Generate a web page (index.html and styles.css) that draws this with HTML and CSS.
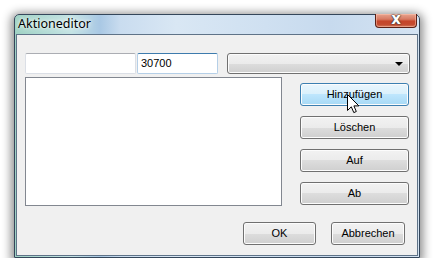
FILE: index.html
```html
<!DOCTYPE html>
<html>
<head>
<meta charset="utf-8">
<link rel="stylesheet" href="styles.css">
</head>
<body>
<div class="window">
  <div class="titlebar">
    <span class="title">Aktioneditor</span>
    <div class="close"><span class="x">x</span></div>
  </div>
  <div class="client">
    <div class="row1">
      <div class="edit e1"></div>
      <div class="edit e2 focus">30700</div>
      <div class="combo"><span class="arrow"></span></div>
    </div>
    <div class="row2">
      <div class="listbox"></div>
      <div class="btncol">
        <div class="btn hover">Hinzufügen</div>
        <div class="btn">Löschen</div>
        <div class="btn">Auf</div>
        <div class="btn">Ab</div>
      </div>
    </div>
    <div class="row3">
      <div class="btn ok">OK</div>
      <div class="btn cancel">Abbrechen</div>
    </div>
  </div>
  <svg class="cursor" width="13" height="20" viewBox="0 0 13 20">
    <path d="M0.5,0.5 L0.5,16.5 L4.3,12.8 L6.8,18.6 L9.3,17.5 L6.9,11.9 L11.9,11.9 Z" fill="#fff" stroke="#000" stroke-width="1" stroke-linejoin="miter"/>
  </svg>
</div>
</body>
</html>
```

FILE: styles.css
```css
* { box-sizing: border-box; }
html, body { margin: 0; padding: 0; background: #fff; }
body {
  padding: 14px 0 0 14px;
  font-family: "Liberation Sans", Arial, sans-serif;
  font-size: 11px;
  color: #000;
}
.window {
  position: relative;
  width: 406px;
  height: 244px;
  border: 1px solid #34465a;
  border-radius: 5px 5px 0 0;
  padding: 0 1px 1px 1px;
  background: linear-gradient(90deg, #9fd2c4 0%, #c4e3e4 14%, #a9c8e4 21%, #c9dcef 26%, #d9e7f4 40%, #cfe0f1 62%, #c7daee 78%, #d4e3f2 100%);
  box-shadow: 0 2px 10px 3px rgba(0,0,0,0.45);
  display: flex;
  flex-direction: column;
}
.titlebar {
  height: 19px;
  position: relative;
  flex: none;
}
.title {
  position: absolute;
  left: 2px;
  top: 0px;
  font-family: "Noto Sans", "Open Sans", sans-serif;
  font-size: 12.5px;
  line-height: 17px;
  color: #000;
  text-shadow: 0 0 6px #fff, 0 0 3px #fff;
}
.close {
  position: absolute;
  right: 1px;
  top: -1px;
  width: 42px;
  height: 14px;
  border: 1px solid #5b2016;
  border-top: none;
  border-radius: 0 0 4px 4px;
  background: linear-gradient(180deg, #e8a48f 0%, #d77a62 40%, #c5452a 55%, #c34a2f 80%, #d27a5c 100%);
  box-shadow: inset 0 0 0 1px rgba(255,200,180,0.5);
  text-align: center;
}
.x {
  display: block;
  font-family: "DejaVu Sans", sans-serif;
  font-weight: bold;
  font-size: 15px;
  line-height: 10px;
  color: #fff;
  text-shadow: 0 0 1px #333, 0 0 1px #333, 0 0 2px #444;
}
.client {
  flex: 1;
  background: #f0f0f0;
  border: 1px solid #5f7388;
  padding: 18px 0 0 8px;
  display: flex;
  flex-direction: column;
}
.row1 {
  display: flex;
  height: 21px;
}
.edit {
  height: 21px;
  background: #fff;
  border: 1px solid #dbdfe6;
  border-top-color: #abadb3;
  border-radius: 2px;
  padding: 3px 3px;
  line-height: 13px;
}
.e1 { width: 111px; }
.e2 { width: 81px; margin-left: 1px; }
.focus {
  border-color: #b5cfe7;
  border-top-color: #3d7bad;
}
.combo {
  position: relative;
  width: 183px;
  margin-left: 9px;
  height: 21px;
  border: 1px solid #707070;
  border-radius: 3px;
  background: linear-gradient(180deg, #f2f2f2 0%, #ebebeb 50%, #dddddd 50%, #cfcfcf 100%);
  box-shadow: inset 0 0 0 1px #fcfcfc;
}
.arrow {
  position: absolute;
  right: 6px;
  top: 8px;
  width: 0;
  height: 0;
  border-left: 4px solid transparent;
  border-right: 4px solid transparent;
  border-top: 4px solid #000;
}
.row2 {
  display: flex;
  margin-top: 3px;
}
.listbox {
  width: 257px;
  height: 129px;
  background: #fff;
  border: 1px solid #828790;
}
.btncol {
  margin-left: 18px;
  margin-top: 6px;
  display: flex;
  flex-direction: column;
  gap: 10px;
}
.btn {
  width: 109px;
  height: 23px;
  border: 1px solid #707070;
  border-radius: 3px;
  background: linear-gradient(180deg, #f2f2f2 0%, #ebebeb 50%, #dddddd 50%, #cfcfcf 100%);
  box-shadow: inset 0 0 0 1px #fcfcfc;
  text-align: center;
  line-height: 20px;
  font-size: 11px;
}
.btn.hover {
  border-color: #3c7fb1;
  background: linear-gradient(180deg, #eaf6fd 0%, #d9f0fc 50%, #bee6fd 50%, #a7d9f5 100%);
}
.row3 {
  display: flex;
  justify-content: flex-end;
  gap: 15px;
  margin-top: 16px;
  padding-right: 12px;
}
.btn.ok { width: 73px; }
.btn.cancel { width: 74px; }
.cursor {
  position: absolute;
  left: 332px;
  top: 79px;
}
```
